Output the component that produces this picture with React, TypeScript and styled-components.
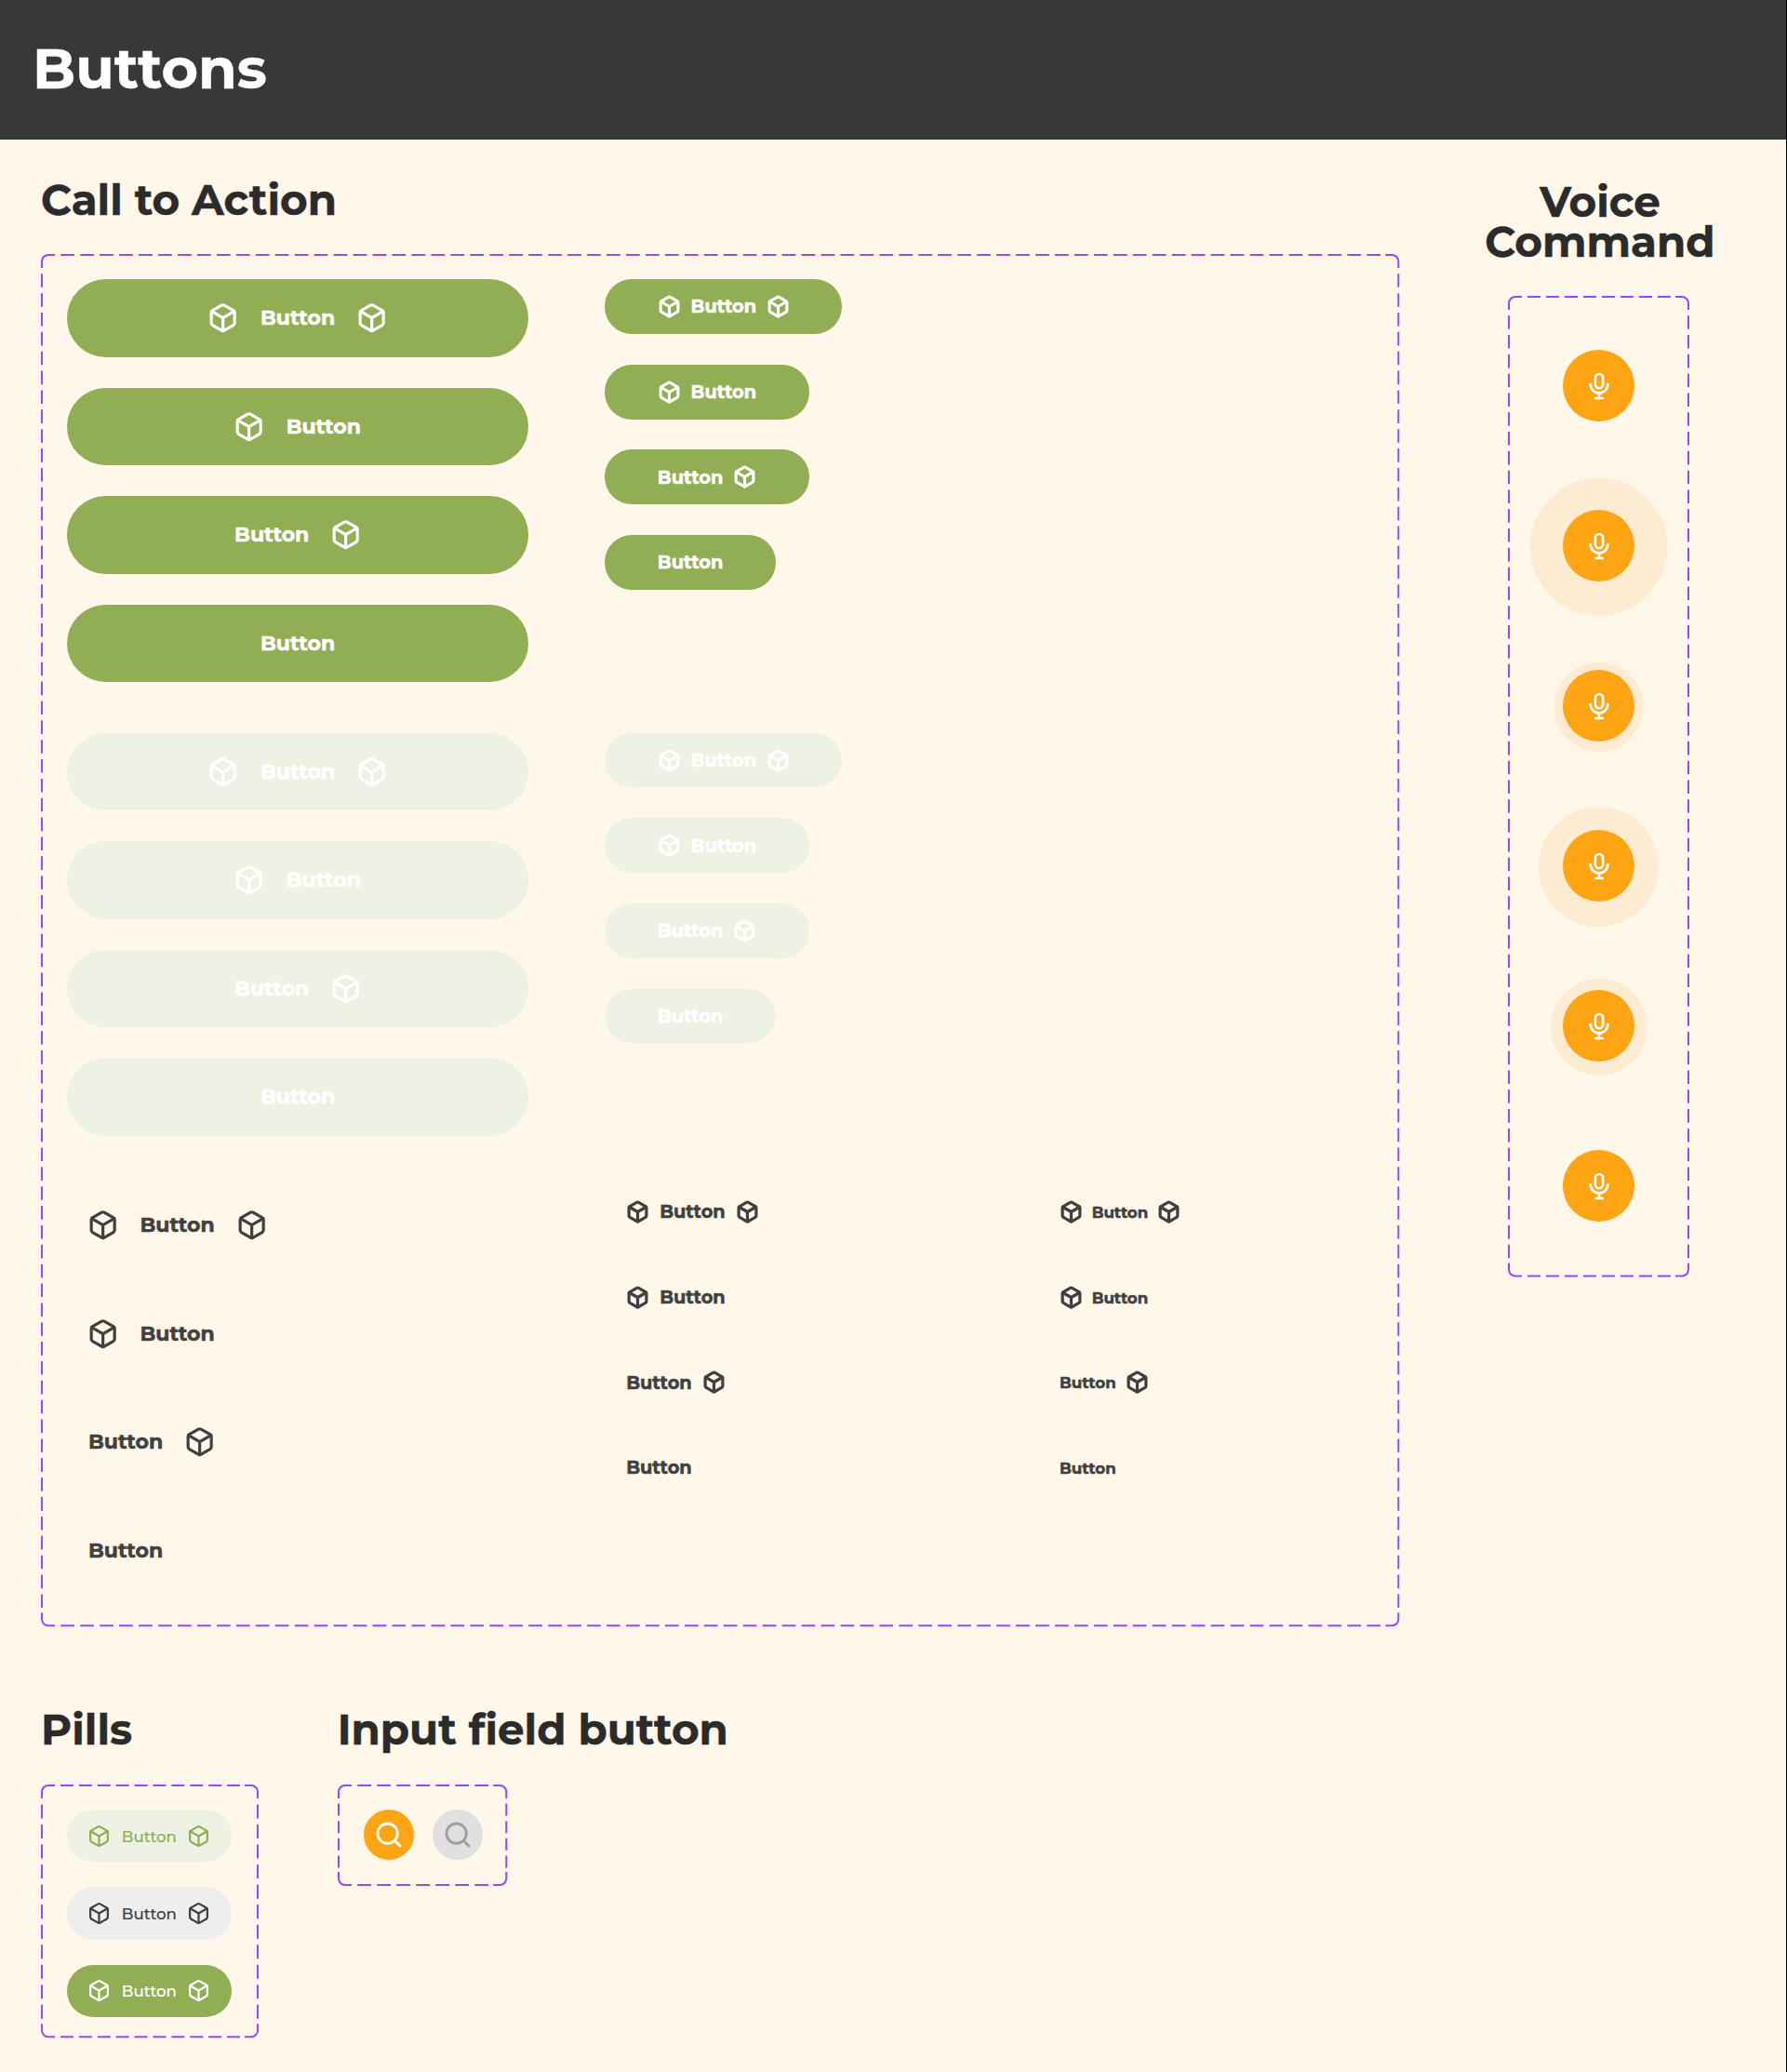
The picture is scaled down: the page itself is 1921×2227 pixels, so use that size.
import React from "react";
import styled, { createGlobalStyle } from "styled-components";

const color = {
  ink: "#2b2b2b",
  text: "#404040",
  header: "#383838",
  cream: "#fff7e9",
  green: "#92ae55",
  mint: "#eef2e4",
  grey: "#eeeeee",
  orange: "#ffa514",
  halo: "#fdecd2",
  violet: "#9747ff",
};

const GlobalStyle = createGlobalStyle`
  *, *::before, *::after { box-sizing: border-box; }
  body {
    margin: 0;
    background: ${color.cream};
    font-family: Montserrat, Inter, "Open Sans", sans-serif;
  }
  button { font: inherit; border: 0; padding: 0; margin: 0; background: none; }
`;

const Page = styled.div`
  width: 1921px;
  height: 2227px;
  overflow: hidden;
  background: ${color.cream};
  border-right: 1px solid #000;
`;

const Header = styled.header`
  height: 150px;
  padding: 43.5px 0 0 35px;
  background: ${color.header};
  border-bottom: 1px solid #2b2b2b;
`;

const Title = styled.h1`
  margin: 0;
  color: #fff;
  font-size: 60.4px;
  line-height: 60px;
  font-weight: 700;
  white-space: nowrap;
  -webkit-text-stroke: 0.4px currentColor;
`;

const Main = styled.main`
  display: flex;
  flex-direction: column;
  padding: 43.2px 0 0 44px;
`;

const TopRow = styled.div`
  display: flex;
  align-items: flex-start;
  gap: 92px;
`;

const BottomRow = styled.div`
  display: flex;
  align-items: flex-start;
  gap: 84.7px;
  margin-top: 88.7px;
`;

const Section = styled.section<{ $width: number }>`
  flex: none;
  width: ${(p) => p.$width}px;
`;

const VoiceSection = styled.section`
  display: flex;
  flex-direction: column;
  align-items: center;
  width: 244px;
  padding-top: 1.8px;
`;

const Heading = styled.h2<{ $gap: number }>`
  margin: 0 0 ${(p) => p.$gap}px;
  color: ${color.ink};
  font-size: 45.3px;
  line-height: 43.3px;
  font-weight: 700;
  white-space: nowrap;
  -webkit-text-stroke: 0.4px currentColor;
`;

const CenteredHeading = styled(Heading)`
  margin-left: 4px;
  text-align: center;
`;

const Panel = styled.div<{ $w: number; $h: number; $pad: string }>`
  position: relative;
  width: ${(p) => p.$w}px;
  height: ${(p) => p.$h}px;
  padding: ${(p) => p.$pad};
`;

const Outline = styled.svg`
  position: absolute;
  inset: 0;
  overflow: visible;
  pointer-events: none;
`;

const CORNER = 14;
const DASH_PITCH = 20.85;

function edge(length: number) {
  const inner = length - CORNER * 2;
  const count = Math.round((inner - 6.3) / DASH_PITCH);
  const pitch = inner / (count + 0.3);
  return { dash: `${pitch * 0.7} ${pitch * 0.3}`, offset: pitch * 0.7 };
}

function DashedOutline({ w, h }: { w: number; h: number }) {
  const l = 1;
  const t = 1;
  const r = w - 1;
  const b = h - 1;
  const R = 7;
  const horizontal = edge(w - 1);
  const vertical = edge(h - 1);
  return (
    <Outline width={w} height={h} fill="none" stroke={color.violet} strokeWidth={2}>
      <path d={`M${l} ${t + CORNER}V${t + R}a${R} ${R} 0 0 1 ${R} ${-R}H${l + CORNER}`} />
      <path d={`M${r - CORNER} ${t}H${r - R}a${R} ${R} 0 0 1 ${R} ${R}V${t + CORNER}`} />
      <path d={`M${r} ${b - CORNER}V${b - R}a${R} ${R} 0 0 1 ${-R} ${R}H${r - CORNER}`} />
      <path d={`M${l + CORNER} ${b}H${l + R}a${R} ${R} 0 0 1 ${-R} ${-R}V${b - CORNER}`} />
      {[t, b].map((y) => (
        <path
          key={`h${y}`}
          d={`M${l + CORNER} ${y}H${r - CORNER}`}
          strokeDasharray={horizontal.dash}
          strokeDashoffset={horizontal.offset}
        />
      ))}
      {[l, r].map((x) => (
        <path
          key={`v${x}`}
          d={`M${x} ${t + CORNER}V${b - CORNER}`}
          strokeDasharray={vertical.dash}
          strokeDashoffset={vertical.offset}
        />
      ))}
    </Outline>
  );
}

function DashedPanel(props: { w: number; h: number; pad: string; children: React.ReactNode }) {
  return (
    <Panel $w={props.w} $h={props.h} $pad={props.pad}>
      <DashedOutline w={props.w} h={props.h} />
      {props.children}
    </Panel>
  );
}

const Icon = styled.svg<{ $size: number }>`
  flex: none;
  display: block;
  width: ${(p) => p.$size}px;
  height: ${(p) => p.$size}px;
  fill: none;
  stroke: currentColor;
  stroke-linecap: round;
  stroke-linejoin: round;
`;

function BoxIcon({ size, stroke }: { size: number; stroke: number }) {
  return (
    <Icon $size={size} viewBox="0 0 24 24" strokeWidth={stroke}>
      <path d="M21 16V8a2 2 0 0 0-1-1.73l-7-4a2 2 0 0 0-2 0l-7 4A2 2 0 0 0 3 8v8a2 2 0 0 0 1 1.73l7 4a2 2 0 0 0 2 0l7-4A2 2 0 0 0 21 16z" />
      <path d="M3.27 6.96 12 12.01l8.73-5.05M12 22.08V12" />
    </Icon>
  );
}

function MicIcon() {
  return (
    <Icon $size={32} viewBox="0 0 32 32" strokeWidth={2.7}>
      <rect x="11.85" y="3" width="8.3" height="15.2" rx="4.15" />
      <path d="M6.7 14.1a9.3 9.3 0 0 0 18.6 0M16 23.4V29M12.3 29h7.4" />
    </Icon>
  );
}

function SearchIcon() {
  return (
    <Icon $size={32} viewBox="0 0 24 24" strokeWidth={2.1}>
      <circle cx="11" cy="11" r="8" />
      <path d="m21 21-4.35-4.35" />
    </Icon>
  );
}

type Tone = "solid" | "disabled" | "plain" | "mint" | "grey";
type Kind = "large" | "small" | "smallPlain" | "tinyPlain" | "pill";

const tones: Record<Tone, { bg: string; fg: string }> = {
  solid: { bg: color.green, fg: "#fff" },
  disabled: { bg: color.mint, fg: "#fff" },
  plain: { bg: "transparent", fg: color.text },
  mint: { bg: color.mint, fg: color.green },
  grey: { bg: color.grey, fg: color.text },
};

const kinds: Record<
  Kind,
  { h: number; pad: number; gap: number; icon: number; stroke: number; label: number; font: number; weight: number }
> = {
  large: { h: 83.6, pad: 22, gap: 22.2, icon: 33.33, stroke: 2.3, label: 82, font: 22.05, weight: 700 },
  small: { h: 58.8, pad: 56.4, gap: 10.8, icon: 25, stroke: 3, label: 70.8, font: 19.4, weight: 700 },
  smallPlain: { h: 54.8, pad: 22.7, gap: 11, icon: 25, stroke: 3.1, label: 71, font: 19.4, weight: 700 },
  tinyPlain: { h: 54.8, pad: 22.5, gap: 9.6, icon: 25, stroke: 3.1, label: 61.2, font: 16.67, weight: 700 },
  pill: { h: 56.25, pad: 22.4, gap: 11, icon: 25, stroke: 2.15, label: 60, font: 16.67, weight: 500 },
};

const ButtonShape = styled.button<{ $kind: Kind; $tone: Tone; $wide: boolean }>`
  display: flex;
  align-items: center;
  justify-content: ${(p) => (p.$wide ? "center" : "flex-start")};
  width: ${(p) => (p.$wide ? "496px" : "max-content")};
  height: ${(p) => kinds[p.$kind].h}px;
  padding: 0 ${(p) => kinds[p.$kind].pad}px;
  gap: ${(p) => kinds[p.$kind].gap}px;
  border-radius: ${(p) => (p.$kind === "large" ? 41.7 : 29.2)}px;
  background: ${(p) => tones[p.$tone].bg};
  color: ${(p) => tones[p.$tone].fg};
`;

const Label = styled.span<{ $kind: Kind }>`
  display: flex;
  justify-content: center;
  width: ${(p) => kinds[p.$kind].label}px;
  padding-top: 1px;
  font-size: ${(p) => kinds[p.$kind].font}px;
  font-weight: ${(p) => kinds[p.$kind].weight};
  line-height: 1.2;
  white-space: nowrap;
  -webkit-text-stroke: ${(p) => (p.$kind === "pill" ? 0.15 : 0.5)}px currentColor;
`;

function Button(props: { kind: Kind; tone: Tone; left?: boolean; right?: boolean }) {
  const { icon, stroke } = kinds[props.kind];
  const wide = props.kind === "large" && props.tone !== "plain";
  return (
    <ButtonShape $kind={props.kind} $tone={props.tone} $wide={wide} disabled={props.tone === "disabled"}>
      {props.left && <BoxIcon size={icon} stroke={stroke} />}
      <Label $kind={props.kind}>Button</Label>
      {props.right && <BoxIcon size={icon} stroke={stroke} />}
    </ButtonShape>
  );
}

const Stack = styled.div<{ $gap: number }>`
  display: flex;
  flex-direction: column;
  align-items: flex-start;
  gap: ${(p) => p.$gap}px;
`;

const variants = [
  { left: true, right: true },
  { left: true, right: false },
  { left: false, right: true },
  { left: false, right: false },
];

function ButtonStack({ kind, tone }: { kind: Kind; tone: Tone }) {
  const pitch = kind === "large" ? 116.67 : 91.67;
  return (
    <Stack $gap={pitch - kinds[kind].h}>
      {variants.map((v, i) => (
        <Button key={i} kind={kind} tone={tone} left={v.left} right={v.right} />
      ))}
    </Stack>
  );
}

const ActionGrid = styled.div`
  display: grid;
  grid-template-columns: 578.3px 466px auto;
  grid-auto-rows: 433.33px;
  row-gap: 54.17px;
`;

const VoiceList = styled.div`
  display: flex;
  flex-direction: column;
  gap: 95px;
  align-items: center;
`;

const VoiceButton = styled.button<{ $halo: number }>`
  position: relative;
  display: flex;
  align-items: center;
  justify-content: center;
  width: 77px;
  height: 77px;
  padding: 1.4px 0 0 1.6px;
  border-radius: 50%;
  background: ${color.orange};
  color: #fff;

  &::before {
    content: "";
    position: absolute;
    z-index: -1;
    left: 50%;
    top: calc(50% + 1.3px);
    width: ${(p) => p.$halo}px;
    height: ${(p) => p.$halo}px;
    border-radius: 50%;
    background: ${color.halo};
    transform: translate(-50%, -50%);
  }
`;

const VoiceLayer = styled.div`
  position: relative;
  z-index: 0;
`;

const RoundRow = styled.div`
  display: flex;
  gap: 19.9px;
`;

const RoundButton = styled.button<{ $active: boolean }>`
  display: flex;
  align-items: center;
  justify-content: center;
  width: 53.8px;
  height: 53.8px;
  border-radius: 50%;
  background: ${(p) => (p.$active ? color.orange : "#e0e0e0")};
  color: ${(p) => (p.$active ? "#fff" : "#9e9e9e")};
`;

export default function App() {
  return (
    <>
      <GlobalStyle />
      <Page>
        <Header>
          <Title>Buttons</Title>
        </Header>
        <Main>
          <TopRow>
            <Section $width={1460}>
              <Heading $gap={36.2}>Call to Action</Heading>
              <DashedPanel w={1460.3} h={1475.3} pad="27.5px 0 0 28px">
                <ActionGrid>
                  <ButtonStack kind="large" tone="solid" />
                  <ButtonStack kind="small" tone="solid" />
                  <span />
                  <ButtonStack kind="large" tone="disabled" />
                  <ButtonStack kind="small" tone="disabled" />
                  <span />
                  <ButtonStack kind="large" tone="plain" />
                  <ButtonStack kind="smallPlain" tone="plain" />
                  <ButtonStack kind="tinyPlain" tone="plain" />
                </ActionGrid>
              </DashedPanel>
            </Section>
            <VoiceSection>
              <CenteredHeading $gap={36.2}>
                Voice
                <br />
                Command
              </CenteredHeading>
              <DashedPanel w={195} h={1054.5} pad="58.2px 0 0 1px">
                <VoiceLayer>
                  <VoiceList>
                    {[0, 148.7, 96.3, 129.7, 104.3, 0].map((halo, i) => (
                      <VoiceButton key={i} $halo={halo} aria-label="Voice command">
                        <MicIcon />
                      </VoiceButton>
                    ))}
                  </VoiceList>
                </VoiceLayer>
              </DashedPanel>
            </VoiceSection>
          </TopRow>
          <BottomRow>
            <Section $width={234}>
              <Heading $gap={37.8}>Pills</Heading>
              <DashedPanel w={234} h={272.3} pad="27.3px 0 0 28px">
                <Stack $gap={27.08}>
                  <Button kind="pill" tone="mint" left right />
                  <Button kind="pill" tone="grey" left right />
                  <Button kind="pill" tone="solid" left right />
                </Stack>
              </DashedPanel>
            </Section>
            <Section $width={500}>
              <Heading $gap={37.8}>Input field button</Heading>
              <DashedPanel w={182.3} h={109} pad="27.3px 0 0 28.6px">
                <RoundRow>
                  <RoundButton $active aria-label="Search">
                    <SearchIcon />
                  </RoundButton>
                  <RoundButton $active={false} aria-label="Search" disabled>
                    <SearchIcon />
                  </RoundButton>
                </RoundRow>
              </DashedPanel>
            </Section>
          </BottomRow>
        </Main>
      </Page>
    </>
  );
}
